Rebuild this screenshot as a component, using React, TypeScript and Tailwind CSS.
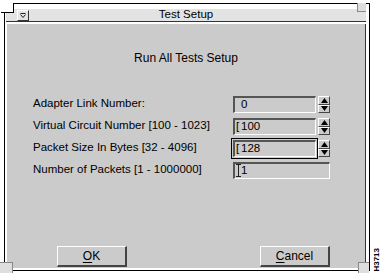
import React from 'react';

const font = "font-['Liberation_Sans',Arial,Helvetica,sans-serif]";

const Spinner: React.FC = () => (
  <div className="ml-[2px] flex h-[17px] w-[12px] flex-col">
    <div className="flex h-[9px] items-center justify-center border-t border-l border-white border-r border-b border-r-[#444] border-b-[#444] bg-[#cbcbcb]">
      <svg width="7" height="5" viewBox="0 0 7 5">
        <polygon points="3.5,0 7,5 0,5" fill="#000" />
      </svg>
    </div>
    <div className="flex h-[8px] items-center justify-center border-t border-l border-white border-r border-b border-r-[#444] border-b-[#444] bg-[#cbcbcb]">
      <svg width="7" height="5" viewBox="0 0 7 5">
        <polygon points="0,0 7,0 3.5,5" fill="#000" />
      </svg>
    </div>
  </div>
);

interface FieldProps {
  value: string;
  cursor?: 'none' | 'bracket' | 'ibeam';
  focused?: boolean;
  wide?: boolean;
}

const Field: React.FC<FieldProps> = ({ value, cursor = 'none', focused, wide }) => (
  <div
    className={`flex h-[17px] items-center border-t-2 border-l-2 border-[#555] border-r border-b border-r-white border-b-white bg-[#cbcbcb] pl-[1px] text-[11.5px] leading-none text-black ${
      wide ? 'w-[97px]' : 'w-[83px]'
    } ${focused ? 'outline outline-black outline-offset-1' : ''}`}
  >
    <span className="inline-flex w-[5px] items-center">
      {cursor === 'bracket' && <span>[</span>}
      {cursor === 'ibeam' && (
        <svg width="5" height="13" viewBox="0 0 5 13">
          <path d="M0 0.5h5M0 12.5h5M2.5 0.5v12" stroke="#222" strokeWidth="1" fill="none" />
        </svg>
      )}
    </span>
    <span>{value}</span>
  </div>
);

const rows = [
  { label: 'Adapter Link Number:', value: '0', cursor: 'none' as const, spin: true },
  { label: 'Virtual Circuit Number [100 - 1023]', value: '100', cursor: 'bracket' as const, spin: true },
  { label: 'Packet Size In Bytes [32 - 4096]', value: '128', cursor: 'bracket' as const, spin: true, focused: true },
  { label: 'Number of Packets [1 - 1000000]', value: '1', cursor: 'ibeam' as const, spin: false },
];

const DialogButton: React.FC<{ first: string; rest: string; className?: string }> = ({ first, rest, className }) => (
  <button
    className={`flex h-[21px] w-[70px] items-center justify-center border-t border-l border-white border-r-2 border-b-2 border-r-[#444] border-b-[#444] bg-[#cbcbcb] text-[12px] text-black ${className ?? ''}`}
  >
    <span className="underline underline-offset-2">{first}</span>
    <span>{rest}</span>
  </button>
);

export default function App() {
  return (
    <div className={`relative flex h-[276px] w-[381px] bg-white ${font}`}>
      {/* window frame */}
      <div className="ml-[4px] mt-[3px] flex h-[268px] w-[366px] flex-col border border-black pl-[1px] pt-[4px]">
        {/* title bar */}
        <div className="flex h-[14px] w-[360px] items-center border-t border-white border-b border-b-[#333] bg-[#e3e3e3]">
          <div className="flex w-[23px] justify-end">
            <div className="flex h-[11px] w-[12px] items-center justify-center border-t border-l border-white border-r border-b border-r-[#333] border-b-[#333] bg-[#e3e3e3]">
              <svg width="6" height="5" viewBox="0 0 6 5">
                <path d="M0.5 0.5h5M0.5 1.5l2.5 3l2.5 -3" stroke="#222" strokeWidth="1" fill="none" />
              </svg>
            </div>
          </div>
          <div className="flex-1 text-center text-[11.5px] leading-none text-black">Test Setup</div>
          <div className="w-[23px]" />
        </div>

        {/* client area */}
        <div className="mt-[2px] flex h-[244px] w-[360px] flex-col border-l border-white border-r border-r-[#333] bg-[#cbcbcb]">
          <div className="mt-[27px] h-[14px] text-center text-[12px] leading-[14px] text-black">Run All Tests Setup</div>

          <div className="mt-[28px] flex flex-col pl-[26px]">
            {rows.map((r) => (
              <div key={r.label} className="flex h-[22px] items-center">
                <div className="w-[200px] text-[11.5px] leading-none text-black">{r.label}</div>
                <Field value={r.value} cursor={r.cursor} focused={r.focused} wide={!r.spin} />
                {r.spin && <Spinner />}
              </div>
            ))}
          </div>

          <div className="mt-auto flex pb-[1px]">
            <DialogButton first="O" rest="K" className="ml-[50px]" />
            <DialogButton first="C" rest="ancel" className="ml-[133px]" />
          </div>
        </div>
      </div>

      {/* figure number */}
      <div className="ml-[3px] flex flex-col justify-end pb-[4px]">
        <span className="rotate-180 text-[8px] font-bold leading-none text-black [writing-mode:vertical-lr]">H3713</span>
      </div>

      {/* frame corner handles */}
      <div className="absolute left-[0px] top-[262px] h-[11px] w-[13px] border-t border-r border-[#888] bg-[#dedede]" />
      <div className="absolute left-[358px] top-[262px] h-[11px] w-[11px] border-t border-l border-[#888] bg-[#dedede]" />
      <div className="absolute left-[357px] top-[3px] h-[9px] w-[9px] border-b border-l border-[#888] bg-[#dedede]" />
      <div className="absolute left-[1px] top-[3px] h-[10px] w-[13px] border-r border-b border-black bg-white" />
    </div>
  );
}
